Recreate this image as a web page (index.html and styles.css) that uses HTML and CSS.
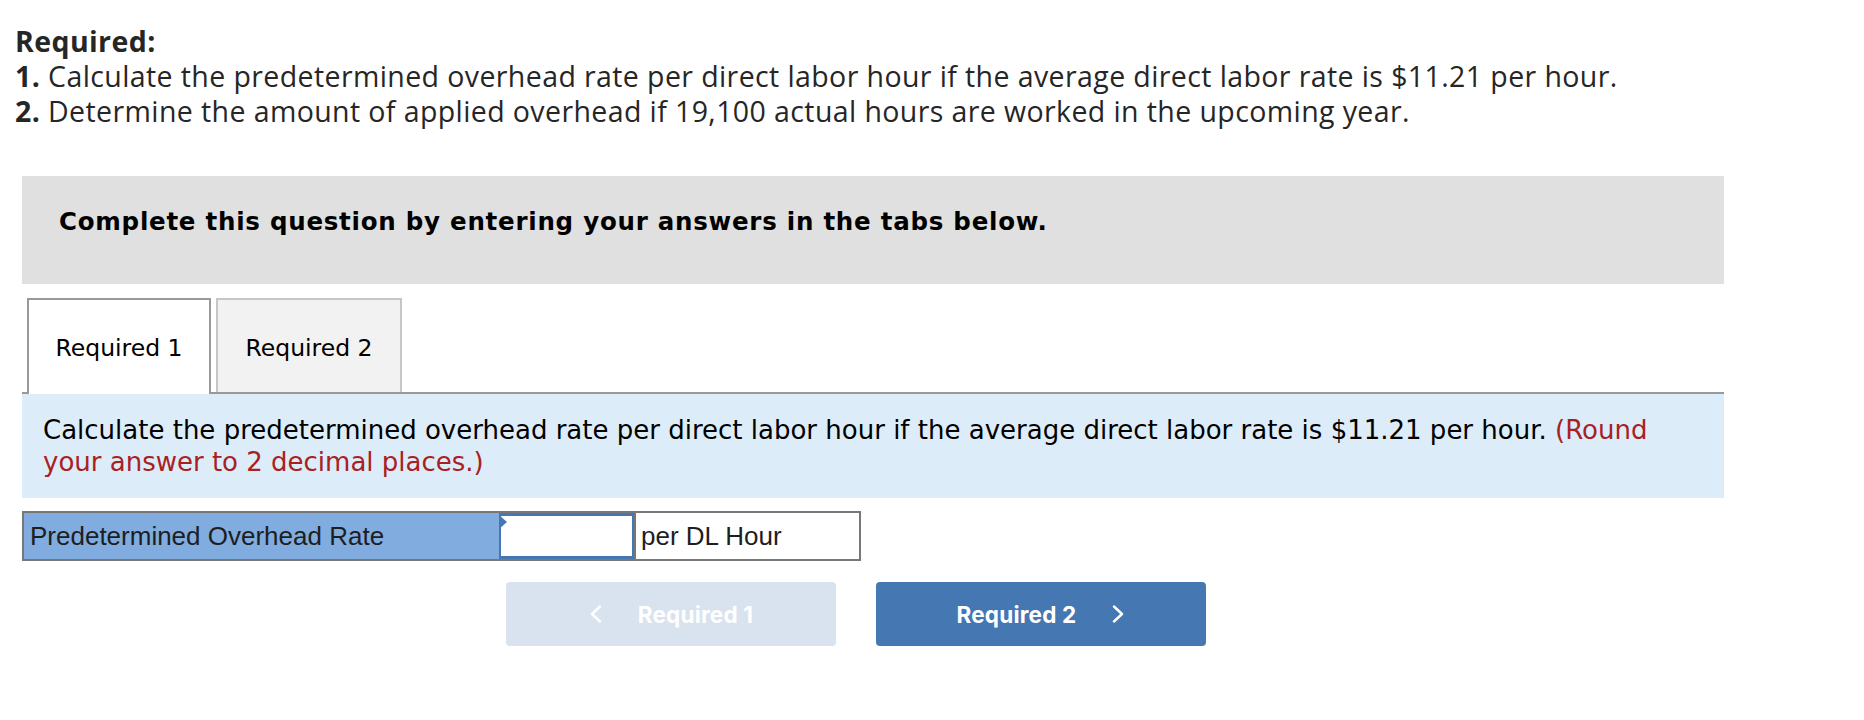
FILE: index.html
```html
<!DOCTYPE html>
<html lang="en">
<head>
<meta charset="utf-8">
<title>Required</title>
<link rel="stylesheet" href="styles.css">
</head>
<body>
<div class="page">
  <div class="intro">
    <div class="intro-title">Required:</div>
    <div class="intro-line"><b>1.</b> Calculate the predetermined overhead rate per direct labor hour if the average direct labor rate is $11.21 per hour.</div>
    <div class="intro-line"><b>2.</b> Determine the amount of applied overhead if 19,100 actual hours are worked in the upcoming year.</div>
  </div>

  <div class="notice">Complete this question by entering your answers in the tabs below.</div>

  <div class="tabs">
    <div class="tab tab-active">Required 1</div>
    <div class="tab tab-idle">Required 2</div>
  </div>

  <div class="instruction">Calculate the predetermined overhead rate per direct labor hour if the average direct labor rate is $11.21 per hour. <span class="hint">(Round your answer to 2 decimal places.)</span></div>

  <div class="answer-row">
    <div class="answer-label">Predetermined Overhead Rate</div>
    <div class="answer-input"><span class="marker"></span></div>
    <div class="answer-unit">per DL Hour</div>
  </div>

  <div class="nav">
    <div class="nav-btn nav-prev">
      <svg class="chev" width="13" height="18" viewBox="0 0 13 18"><polyline points="11,1.5 3,9 11,16.5" fill="none" stroke="#ffffff" stroke-width="2.4" stroke-linecap="round" stroke-linejoin="round"/></svg>
      <span>Required 1</span>
    </div>
    <div class="nav-btn nav-next">
      <span>Required 2</span>
      <svg class="chev" width="13" height="18" viewBox="0 0 13 18"><polyline points="2,1.5 10,9 2,16.5" fill="none" stroke="#ffffff" stroke-width="2.4" stroke-linecap="round" stroke-linejoin="round"/></svg>
    </div>
  </div>
</div>
</body>
</html>
```

FILE: styles.css
```css
html, body {
  margin: 0;
  padding: 0;
  background: #ffffff;
}

.page {
  padding: 24px 0 0 0;
}

.intro {
  padding-left: 15px;
  font-family: "Open Sans", "Liberation Sans", sans-serif;
  font-size: 28.5px;
  letter-spacing: 0.4px;
  line-height: 35px;
  color: #262626;
}

.intro-title {
  font-weight: 700;
}

.intro-line b {
  font-weight: 700;
}

.notice {
  margin: 47px 0 0 22px;
  width: 1702px;
  height: 108px;
  box-sizing: border-box;
  padding: 31px 0 0 37px;
  background: #e0e0e0;
  font-family: "DejaVu Sans", Verdana, sans-serif;
  font-weight: 700;
  font-size: 24.5px;
  letter-spacing: 0.75px;
  line-height: 30px;
  color: #000000;
}

.tabs {
  margin: 14px 0 0 22px;
  width: 1702px;
  display: flex;
  gap: 5px;
  padding-left: 5px;
  box-sizing: border-box;
  border-bottom: 2px solid #999999;
  height: 96px;
}

.tab {
  box-sizing: border-box;
  height: 94px;
  display: flex;
  align-items: center;
  justify-content: center;
  padding-top: 4px;
  font-family: "DejaVu Sans", Verdana, sans-serif;
  font-size: 23.5px;
  color: #000000;
}

.tab-active {
  width: 184px;
  height: 96px;
  border: 2px solid #999999;
  border-bottom: none;
  background: #ffffff;
  padding-bottom: 2px;
}

.tab-idle {
  width: 186px;
  border: 2px solid #c6c6c6;
  border-bottom: none;
  background: #f2f2f2;
}

.instruction {
  margin-left: 22px;
  width: 1702px;
  box-sizing: border-box;
  padding: 20px 60px 20px 21px;
  background: #ddecf9;
  font-family: "DejaVu Sans", Verdana, sans-serif;
  font-size: 26px;
  line-height: 32px;
  color: #000000;
}

.hint {
  color: #a8211f;
}

.answer-row {
  margin: 13px 0 0 22px;
  width: 839px;
  height: 50px;
  box-sizing: border-box;
  border: 2px solid #777777;
  display: flex;
  font-family: "Liberation Sans", Arial, sans-serif;
  font-size: 26px;
  color: #1e1e1e;
}

.answer-label {
  width: 475px;
  background: #80acdf;
  display: flex;
  align-items: center;
  padding-left: 6px;
  box-sizing: border-box;
}

.answer-input {
  position: relative;
  width: 135px;
  box-sizing: border-box;
  border: 2px solid #4577b3;
  border-top-width: 3px;
  border-bottom-width: 3px;
  background: #ffffff;
}

.marker {
  position: absolute;
  left: -2px;
  top: -1px;
  width: 0;
  height: 0;
  border-top: 7px solid transparent;
  border-bottom: 7px solid transparent;
  border-left: 8px solid #4577b3;
}

.answer-unit {
  flex: 1;
  border-left: 2px solid #777777;
  background: #ffffff;
  display: flex;
  align-items: center;
  padding-left: 5px;
}

.nav {
  margin: 21px 0 0 506px;
  display: flex;
  gap: 40px;
}

.nav-btn {
  width: 330px;
  height: 64px;
  border-radius: 4px;
  display: flex;
  align-items: center;
  justify-content: center;
  gap: 36px;
  font-family: "Inter", "Roboto", sans-serif;
  font-weight: 700;
  font-size: 22.5px;
  letter-spacing: 0.2px;
  color: #ffffff;
}

.nav-prev {
  background: #d9e3ef;
}

.nav-next {
  background: #4577b3;
}

.chev {
  display: block;
}
```
